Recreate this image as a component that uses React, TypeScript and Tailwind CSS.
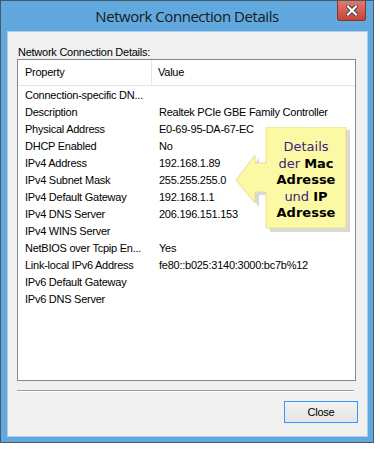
import React from 'react';

interface Row {
  property: string;
  value?: string;
}

const rows: Row[] = [
  { property: 'Connection-specific DN...' },
  { property: 'Description', value: 'Realtek PCIe GBE Family Controller' },
  { property: 'Physical Address', value: 'E0-69-95-DA-67-EC' },
  { property: 'DHCP Enabled', value: 'No' },
  { property: 'IPv4 Address', value: '192.168.1.89' },
  { property: 'IPv4 Subnet Mask', value: '255.255.255.0' },
  { property: 'IPv4 Default Gateway', value: '192.168.1.1' },
  { property: 'IPv4 DNS Server', value: '206.196.151.153' },
  { property: 'IPv4 WINS Server' },
  { property: 'NetBIOS over Tcpip En...', value: 'Yes' },
  { property: 'Link-local IPv6 Address', value: 'fe80::b025:3140:3000:bc7b%12' },
  { property: 'IPv6 Default Gateway' },
  { property: 'IPv6 DNS Server' },
];

// yellow note with arrow pointing at the IP values
const Callout: React.FC = () => (
  <div className="absolute left-[228px] top-[95px] w-[114px] h-[105px]">
    <svg width="114" height="105" className="absolute left-0 top-0">
      <path
        d="M4 56 L23 31 L23 39 L34 39 L34 3 L114 3 L114 105 L34 105 L34 68 L23 68 L23 80 Z"
        fill="#b9b9b9"
        opacity="0.55"
      />
      <path
        d="M0 53 L19 28 L19 36 L30 36 L30 0 L110 0 L110 101 L30 101 L30 65 L19 65 L19 76 Z"
        fill="#fbf9a3"
        stroke="#e3dd9c"
        strokeWidth="1"
      />
    </svg>
    <div className="absolute left-[30px] top-[12px] w-[80px] flex flex-col items-center text-[13px] leading-[16.6px] tracking-normal font-['DejaVu_Sans',sans-serif] text-[#44207f]">
      <span>Details</span>
      <span>
        der <b className="text-black">Mac</b>
      </span>
      <b className="text-black">Adresse</b>
      <span>
        und <b className="text-black">IP</b>
      </span>
      <b className="text-black">Adresse</b>
    </div>
  </div>
);

const App: React.FC = () => {
  return (
    <div className="w-[380px] h-[457px] bg-white font-['Liberation_Sans',Arial,sans-serif] text-[11px] tracking-[-0.25px] text-black relative">
      <div className="w-[374px] h-[443px] border border-[#48586a] bg-[#60a8dd] flex flex-col">
        {/* title bar */}
        <div className="h-[30px] relative flex items-center justify-center">
          <span className="text-[15px] text-[#1a1a1a] font-['Open_Sans',sans-serif] tracking-[-0.45px] mt-[1px]">
            Network Connection Details
          </span>
          <div className="absolute right-[7px] top-0 w-[29px] h-[20px] bg-gradient-to-b from-[#e07a6f] to-[#c74339] border border-t-0 border-[#8e2f2a] rounded-b-[3px] flex items-center justify-center">
            <svg width="12" height="11" viewBox="0 0 12 11">
              <path d="M2 1.5 L10 9.5 M10 1.5 L2 9.5" stroke="#3a3a3a" strokeWidth="4" strokeLinecap="square" />
              <path d="M2 1.5 L10 9.5 M10 1.5 L2 9.5" stroke="#ffffff" strokeWidth="2.2" strokeLinecap="square" />
            </svg>
          </div>
        </div>
        {/* client area */}
        <div className="flex-1 ml-[6px] mr-[5px] mb-[5px] border border-[#a9cdea] bg-[#f0f0f0] flex flex-col relative">
          <div className="pl-[10px] pt-[12px] h-[27px] leading-[16px]">Network Connection Details:</div>
          <div className="ml-[9px] w-[339px] h-[322px] border border-[#828790] bg-white flex flex-col">
            <div className="h-[26px] flex items-center border-b border-[#e5e5e5]">
              <div className="w-[134px] h-full pl-[7px] flex items-center border-r border-[#e5e5e5]">Property</div>
              <div className="pl-[6px]">Value</div>
            </div>
            <div className="pt-[1px] flex flex-col">
              {rows.map((row, i) => (
                <div key={i} className="h-[17px] flex items-center">
                  <div className="w-[134px] pl-[7px] whitespace-nowrap">{row.property}</div>
                  <div className="pl-[7px] whitespace-nowrap">{row.value ?? ''}</div>
                </div>
              ))}
            </div>
          </div>
          <div className="ml-[9px] mt-[9px] w-[337px] h-[2px] border-t border-[#a0a0a0] border-b border-b-white" />
          <div className="flex justify-end pr-[9px] pt-[9px]">
            <button className="w-[74px] h-[22px] border border-[#3399ff] bg-gradient-to-b from-[#f2f2f2] to-[#e4e4e4] text-[11px] flex items-center justify-center">
              Close
            </button>
          </div>
          <Callout />
        </div>
      </div>
    </div>
  );
};

export default App;
